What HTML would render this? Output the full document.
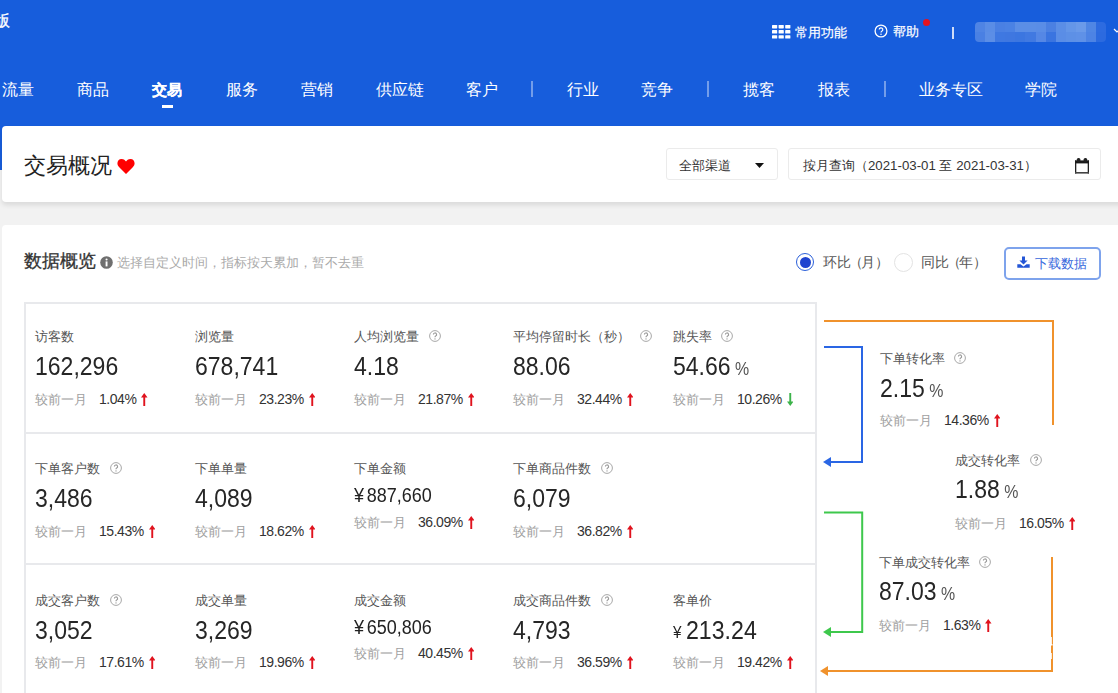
<!DOCTYPE html>
<html><head><meta charset="utf-8">
<style>
html,body{margin:0;padding:0}
body{width:1118px;height:693px;overflow:hidden;position:relative;background:#f2f2f2;font-family:"Liberation Sans",sans-serif;color:#333}
.a{position:absolute;white-space:nowrap;line-height:1}
.hdr{position:absolute;left:0;top:0;width:1118px;height:170px;background:#175ddc}
.nav{color:#fff;font-size:15.5px;top:82px}
.card{position:absolute;background:#fff;border-radius:4px}
.lbl{font-size:13.4px;color:#555}
.val{font-size:26px;color:#262626;transform:scaleX(.885);transform-origin:0 0}
.cmp{font-size:13px;color:#a0a0a0}
.pct{font-size:14px;color:#333;letter-spacing:-.45px}
.pct svg{margin-left:5px;margin-top:1px;vertical-align:top}
</style></head><body>

<div class="hdr"></div>
<div class="a" style="left:-6px;top:13px;font-size:15.5px;color:#fff;-webkit-text-stroke:.3px #fff">版</div>
<div class="a nav" style="left:2px">流量</div>
<div class="a nav" style="left:77px">商品</div>
<div class="a nav" style="left:152px;top:82.5px;font-size:14.8px;font-weight:bold;-webkit-text-stroke:.2px #fff">交易</div>
<div class="a nav" style="left:226px">服务</div>
<div class="a nav" style="left:301px">营销</div>
<div class="a nav" style="left:376px">供应链</div>
<div class="a nav" style="left:466px">客户</div>
<div class="a" style="left:531px;top:81px;width:2px;height:16px;background:rgba(255,255,255,.4)"></div>
<div class="a nav" style="left:567px">行业</div>
<div class="a nav" style="left:641px">竞争</div>
<div class="a" style="left:707px;top:81px;width:2px;height:16px;background:rgba(255,255,255,.4)"></div>
<div class="a nav" style="left:743px">揽客</div>
<div class="a nav" style="left:818px">报表</div>
<div class="a" style="left:884px;top:81px;width:2px;height:16px;background:rgba(255,255,255,.4)"></div>
<div class="a nav" style="left:919px">业务专区</div>
<div class="a nav" style="left:1025px">学院</div>
<div class="a" style="left:162px;top:105px;width:11px;height:2.5px;background:#fff"></div>
<svg class="a" style="left:772px;top:25px" width="19" height="14" viewBox="0 0 19 14"><rect x="0.0" y="0.0" width="5.2" height="3.4" rx=".6" fill="#fff"/><rect x="6.6" y="0.0" width="5.2" height="3.4" rx=".6" fill="#fff"/><rect x="13.2" y="0.0" width="5.2" height="3.4" rx=".6" fill="#fff"/><rect x="0.0" y="5.1" width="5.2" height="3.4" rx=".6" fill="#fff"/><rect x="6.6" y="5.1" width="5.2" height="3.4" rx=".6" fill="#fff"/><rect x="13.2" y="5.1" width="5.2" height="3.4" rx=".6" fill="#fff"/><rect x="0.0" y="10.2" width="5.2" height="3.4" rx=".6" fill="#fff"/><rect x="6.6" y="10.2" width="5.2" height="3.4" rx=".6" fill="#fff"/><rect x="13.2" y="10.2" width="5.2" height="3.4" rx=".6" fill="#fff"/></svg>
<div class="a" style="left:795px;top:26px;font-size:13px;color:#fff;-webkit-text-stroke:.2px #fff">常用功能</div>
<svg class="a" style="left:874px;top:24px" width="14" height="14" viewBox="0 0 14 14"><circle cx="7" cy="7" r="5.9" fill="none" stroke="#fff" stroke-width="1.3"/><path d="M5.2 5.6a1.8 1.8 0 1 1 2.6 1.6c-.6.3-.8.6-.8 1.3" fill="none" stroke="#fff" stroke-width="1.2"/><circle cx="7" cy="10.3" r=".75" fill="#fff"/></svg>
<div class="a" style="left:893px;top:25px;font-size:13px;color:#fff;-webkit-text-stroke:.2px #fff">帮助</div>
<div class="a" style="left:923px;top:19px;width:7px;height:7px;border-radius:50%;background:#e3131f"></div>
<div class="a" style="left:952px;top:27px;width:2px;height:12px;background:#cfdcf7"></div>
<div class="a" style="left:975px;top:22px;width:131px;height:20px;border-radius:4px;overflow:hidden;filter:blur(.6px)"><div class="a" style="left:0px;top:0;width:11px;height:10px;background:#4f84e4"></div><div class="a" style="left:0px;top:10px;width:11px;height:10px;background:#4a80e3"></div><div class="a" style="left:10px;top:0;width:11px;height:10px;background:#5a8de6"></div><div class="a" style="left:10px;top:10px;width:11px;height:10px;background:#5c8ee6"></div><div class="a" style="left:20px;top:0;width:11px;height:10px;background:#4a80e3"></div><div class="a" style="left:20px;top:10px;width:11px;height:10px;background:#3f78e1"></div><div class="a" style="left:30px;top:0;width:11px;height:10px;background:#4b82e4"></div><div class="a" style="left:30px;top:10px;width:11px;height:10px;background:#3f77e0"></div><div class="a" style="left:40px;top:0;width:11px;height:10px;background:#5b8ee6"></div><div class="a" style="left:40px;top:10px;width:11px;height:10px;background:#3c76e0"></div><div class="a" style="left:50px;top:0;width:11px;height:10px;background:#5b8ee6"></div><div class="a" style="left:50px;top:10px;width:11px;height:10px;background:#4179e1"></div><div class="a" style="left:61px;top:0;width:11px;height:10px;background:#5a8de6"></div><div class="a" style="left:61px;top:10px;width:11px;height:10px;background:#5587e5"></div><div class="a" style="left:71px;top:0;width:11px;height:10px;background:#4b80e2"></div><div class="a" style="left:71px;top:10px;width:11px;height:10px;background:#3a74e0"></div><div class="a" style="left:81px;top:0;width:11px;height:10px;background:#5b8ee6"></div><div class="a" style="left:81px;top:10px;width:11px;height:10px;background:#5a8de6"></div><div class="a" style="left:91px;top:0;width:11px;height:10px;background:#6496e8"></div><div class="a" style="left:91px;top:10px;width:11px;height:10px;background:#5d90e6"></div><div class="a" style="left:101px;top:0;width:11px;height:10px;background:#6a9ae9"></div><div class="a" style="left:101px;top:10px;width:11px;height:10px;background:#5f91e7"></div><div class="a" style="left:111px;top:0;width:11px;height:10px;background:#4f86e4"></div><div class="a" style="left:111px;top:10px;width:11px;height:10px;background:#4d83e4"></div><div class="a" style="left:121px;top:0;width:11px;height:10px;background:#2d6be0"></div><div class="a" style="left:121px;top:10px;width:11px;height:10px;background:#2c6adf"></div></div>
<svg class="a" style="left:1113px;top:28px" width="8" height="6" viewBox="0 0 8 6"><path d="M1 1l3 3 3-3" fill="none" stroke="#fff" stroke-width="1.2"/></svg>
<div class="card" style="left:2px;top:126px;width:1140px;height:76px;box-shadow:0 3px 5px rgba(0,0,0,.1)"></div>
<div class="a" style="left:24px;top:155px;font-size:22px;color:#222">交易概况</div>
<svg class="a" style="left:117px;top:159px" width="18" height="15" viewBox="0 0 18 15"><path d="M9 15L2 8C-1 5 .5 0 4.5 0 6.8 0 8.2 1.4 9 2.6 9.8 1.4 11.2 0 13.5 0 17.5 0 19 5 16 8z" fill="#ff0000"/></svg>
<div class="a" style="left:666px;top:148px;width:110px;height:30px;border:1px solid #ebebeb;border-radius:3px;background:#fff"></div>
<div class="a" style="left:679px;top:159px;font-size:13.3px;color:#333">全部渠道</div>
<svg class="a" style="left:755px;top:163px" width="9" height="5" viewBox="0 0 9 5"><path d="M0 0H9L4.5 5z" fill="#111"/></svg>
<div class="a" style="left:788px;top:148px;width:311px;height:30px;border:1px solid #ebebeb;border-radius:3px;background:#fff"></div>
<div class="a" style="left:803px;top:158.5px;font-size:13.25px;color:#333">按月查询（2021-03-01 至 2021-03-31）</div>
<svg class="a" style="left:1074px;top:157px" width="16" height="17" viewBox="0 0 16 17"><rect x="1" y="3.5" width="1.3" height="13" fill="#222"/><rect x="13.7" y="3.5" width="1.3" height="13" fill="#222"/><rect x="1" y="15" width="14" height="1.6" fill="#444"/><rect x="1" y="3.4" width="14" height="3" fill="#1a1a1a"/><rect x="2.8" y="1" width="3.6" height="4" rx="1.6" fill="#222"/><rect x="9.6" y="1" width="3.6" height="4" rx="1.6" fill="#222"/></svg>
<div class="card" style="left:2px;top:225px;width:1140px;height:600px"></div>
<div class="a" style="left:24px;top:253px;font-size:17.5px;color:#333;-webkit-text-stroke:.3px #333">数据概览</div>
<svg class="a" style="left:100px;top:256px" width="13" height="13" viewBox="0 0 13 13"><circle cx="6.5" cy="6.5" r="6.3" fill="#6f6f6f"/><rect x="5.6" y="5.4" width="1.9" height="5" fill="#fff"/><circle cx="6.55" cy="3.5" r="1.05" fill="#fff"/></svg>
<div class="a" style="left:117px;top:256px;font-size:13.2px;color:#aaa">选择自定义时间，指标按天累加，暂不去重</div>
<div class="a" style="left:796px;top:253px;width:16px;height:16px;border:1.5px solid #2b5fd9;border-radius:50%;background:#fff"></div>
<div class="a" style="left:800px;top:257px;width:11px;height:11px;border-radius:50%;background:#1e42cf"></div>
<div class="a" style="left:823px;top:255.5px;font-size:13.6px;color:#555">环<span style="letter-spacing:-1.8px">比（</span>月）</div>
<div class="a" style="left:894px;top:253px;width:17px;height:17px;border:1px solid #e3e3e3;border-radius:50%;background:#fff"></div>
<div class="a" style="left:921px;top:255.5px;font-size:13.6px;color:#555">同<span style="letter-spacing:-1.8px">比（</span>年）</div>
<div class="a" style="left:1004px;top:247px;width:97px;height:33px;box-sizing:border-box;border:2px solid #7ea3ec;border-radius:5px"></div>
<svg class="a" style="left:1017px;top:256px" width="13" height="12" viewBox="0 0 13 12"><path d="M5 0.5h3v4h2.6L6.5 8.6 2.4 4.5H5z" fill="#2456d6"/><path d="M0.3 8.3h3.2l3 2.2 3-2.2h3.2v3.5H0.3z" fill="#2456d6"/></svg>
<div class="a" style="left:1035px;top:257px;font-size:13px;color:#3566dc">下载数据</div>
<div class="a" style="left:24px;top:302px;width:793px;height:420px;border:2px solid #e8e9ec;border-bottom:0;box-sizing:border-box"></div>
<div class="a" style="left:26px;top:432px;width:789px;height:2px;background:#e8e9ec"></div>
<div class="a" style="left:26px;top:563px;width:789px;height:2px;background:#e8e9ec"></div>
<div class="a lbl" style="left:35px;top:330px">访客数</div>
<div class="a val" style="left:35px;top:353px">162,296</div>
<div class="a cmp" style="left:35px;top:393px">较前一月</div>
<div class="a pct" style="left:99px;top:391.5px">1.04%<svg width="6.5" height="13" viewBox="0 0 6.5 13"><path d="M3.25 0L6.5 4.4H4.2V13H2.3V4.4H0z" fill="#e0131e"/></svg></div>
<div class="a lbl" style="left:195px;top:330px">浏览量</div>
<div class="a val" style="left:195px;top:353px">678,741</div>
<div class="a cmp" style="left:195px;top:393px">较前一月</div>
<div class="a pct" style="left:259px;top:391.5px">23.23%<svg width="6.5" height="13" viewBox="0 0 6.5 13"><path d="M3.25 0L6.5 4.4H4.2V13H2.3V4.4H0z" fill="#e0131e"/></svg></div>
<div class="a lbl" style="left:354px;top:330px">人均浏览量</div>
<div class="a" style="left:429px;top:330px"><svg width="12" height="12" viewBox="0 0 12 12" style="vertical-align:top"><circle cx="6" cy="6" r="5.4" fill="none" stroke="#a8a8a8" stroke-width="1"/><path d="M4.4 4.6a1.6 1.6 0 1 1 2.3 1.4c-.5.3-.7.55-.7 1.2" fill="none" stroke="#999" stroke-width="1.15"/><circle cx="6" cy="8.9" r=".7" fill="#999"/></svg></div>
<div class="a val" style="left:354px;top:353px">4.18</div>
<div class="a cmp" style="left:354px;top:393px">较前一月</div>
<div class="a pct" style="left:418px;top:391.5px">21.87%<svg width="6.5" height="13" viewBox="0 0 6.5 13"><path d="M3.25 0L6.5 4.4H4.2V13H2.3V4.4H0z" fill="#e0131e"/></svg></div>
<div class="a lbl" style="left:513px;top:330px">平均停留时长（秒）</div>
<div class="a" style="left:640px;top:330px"><svg width="12" height="12" viewBox="0 0 12 12" style="vertical-align:top"><circle cx="6" cy="6" r="5.4" fill="none" stroke="#a8a8a8" stroke-width="1"/><path d="M4.4 4.6a1.6 1.6 0 1 1 2.3 1.4c-.5.3-.7.55-.7 1.2" fill="none" stroke="#999" stroke-width="1.15"/><circle cx="6" cy="8.9" r=".7" fill="#999"/></svg></div>
<div class="a val" style="left:513px;top:353px">88.06</div>
<div class="a cmp" style="left:513px;top:393px">较前一月</div>
<div class="a pct" style="left:577px;top:391.5px">32.44%<svg width="6.5" height="13" viewBox="0 0 6.5 13"><path d="M3.25 0L6.5 4.4H4.2V13H2.3V4.4H0z" fill="#e0131e"/></svg></div>
<div class="a lbl" style="left:673px;top:330px">跳失率</div>
<div class="a" style="left:721px;top:330px"><svg width="12" height="12" viewBox="0 0 12 12" style="vertical-align:top"><circle cx="6" cy="6" r="5.4" fill="none" stroke="#a8a8a8" stroke-width="1"/><path d="M4.4 4.6a1.6 1.6 0 1 1 2.3 1.4c-.5.3-.7.55-.7 1.2" fill="none" stroke="#999" stroke-width="1.15"/><circle cx="6" cy="8.9" r=".7" fill="#999"/></svg></div>
<div class="a val" style="left:673px;top:353px">54.66<span style="font-size:18px;color:#555"> %</span></div>
<div class="a cmp" style="left:673px;top:393px">较前一月</div>
<div class="a pct" style="left:737px;top:391.5px">10.26%<svg width="6.5" height="13" viewBox="0 0 6.5 13"><path d="M3.25 13L6.5 8.6H4.2V0H2.3V8.6H0z" fill="#3cb34a"/></svg></div>
<div class="a lbl" style="left:35px;top:462px">下单客户数</div>
<div class="a" style="left:110px;top:462px"><svg width="12" height="12" viewBox="0 0 12 12" style="vertical-align:top"><circle cx="6" cy="6" r="5.4" fill="none" stroke="#a8a8a8" stroke-width="1"/><path d="M4.4 4.6a1.6 1.6 0 1 1 2.3 1.4c-.5.3-.7.55-.7 1.2" fill="none" stroke="#999" stroke-width="1.15"/><circle cx="6" cy="8.9" r=".7" fill="#999"/></svg></div>
<div class="a val" style="left:35px;top:485px">3,486</div>
<div class="a cmp" style="left:35px;top:525px">较前一月</div>
<div class="a pct" style="left:99px;top:523.5px">15.43%<svg width="6.5" height="13" viewBox="0 0 6.5 13"><path d="M3.25 0L6.5 4.4H4.2V13H2.3V4.4H0z" fill="#e0131e"/></svg></div>
<div class="a lbl" style="left:195px;top:462px">下单单量</div>
<div class="a val" style="left:195px;top:485px">4,089</div>
<div class="a cmp" style="left:195px;top:525px">较前一月</div>
<div class="a pct" style="left:259px;top:523.5px">18.62%<svg width="6.5" height="13" viewBox="0 0 6.5 13"><path d="M3.25 0L6.5 4.4H4.2V13H2.3V4.4H0z" fill="#e0131e"/></svg></div>
<div class="a lbl" style="left:354px;top:462px">下单金额</div>
<div class="a" style="left:354px;top:485px;font-size:20px;color:#222;transform:scaleX(.9);transform-origin:0 0">¥<span style="margin-left:3px">887,660</span></div>
<div class="a cmp" style="left:354px;top:516px">较前一月</div>
<div class="a pct" style="left:418px;top:514.5px">36.09%<svg width="6.5" height="13" viewBox="0 0 6.5 13"><path d="M3.25 0L6.5 4.4H4.2V13H2.3V4.4H0z" fill="#e0131e"/></svg></div>
<div class="a lbl" style="left:513px;top:462px">下单商品件数</div>
<div class="a" style="left:601px;top:462px"><svg width="12" height="12" viewBox="0 0 12 12" style="vertical-align:top"><circle cx="6" cy="6" r="5.4" fill="none" stroke="#a8a8a8" stroke-width="1"/><path d="M4.4 4.6a1.6 1.6 0 1 1 2.3 1.4c-.5.3-.7.55-.7 1.2" fill="none" stroke="#999" stroke-width="1.15"/><circle cx="6" cy="8.9" r=".7" fill="#999"/></svg></div>
<div class="a val" style="left:513px;top:485px">6,079</div>
<div class="a cmp" style="left:513px;top:525px">较前一月</div>
<div class="a pct" style="left:577px;top:523.5px">36.82%<svg width="6.5" height="13" viewBox="0 0 6.5 13"><path d="M3.25 0L6.5 4.4H4.2V13H2.3V4.4H0z" fill="#e0131e"/></svg></div>
<div class="a lbl" style="left:35px;top:594px">成交客户数</div>
<div class="a" style="left:110px;top:594px"><svg width="12" height="12" viewBox="0 0 12 12" style="vertical-align:top"><circle cx="6" cy="6" r="5.4" fill="none" stroke="#a8a8a8" stroke-width="1"/><path d="M4.4 4.6a1.6 1.6 0 1 1 2.3 1.4c-.5.3-.7.55-.7 1.2" fill="none" stroke="#999" stroke-width="1.15"/><circle cx="6" cy="8.9" r=".7" fill="#999"/></svg></div>
<div class="a val" style="left:35px;top:617px">3,052</div>
<div class="a cmp" style="left:35px;top:656px">较前一月</div>
<div class="a pct" style="left:99px;top:654.5px">17.61%<svg width="6.5" height="13" viewBox="0 0 6.5 13"><path d="M3.25 0L6.5 4.4H4.2V13H2.3V4.4H0z" fill="#e0131e"/></svg></div>
<div class="a lbl" style="left:195px;top:594px">成交单量</div>
<div class="a val" style="left:195px;top:617px">3,269</div>
<div class="a cmp" style="left:195px;top:656px">较前一月</div>
<div class="a pct" style="left:259px;top:654.5px">19.96%<svg width="6.5" height="13" viewBox="0 0 6.5 13"><path d="M3.25 0L6.5 4.4H4.2V13H2.3V4.4H0z" fill="#e0131e"/></svg></div>
<div class="a lbl" style="left:354px;top:594px">成交金额</div>
<div class="a" style="left:354px;top:617px;font-size:20px;color:#222;transform:scaleX(.9);transform-origin:0 0">¥<span style="margin-left:3px">650,806</span></div>
<div class="a cmp" style="left:354px;top:647px">较前一月</div>
<div class="a pct" style="left:418px;top:645.5px">40.45%<svg width="6.5" height="13" viewBox="0 0 6.5 13"><path d="M3.25 0L6.5 4.4H4.2V13H2.3V4.4H0z" fill="#e0131e"/></svg></div>
<div class="a lbl" style="left:513px;top:594px">成交商品件数</div>
<div class="a" style="left:601px;top:594px"><svg width="12" height="12" viewBox="0 0 12 12" style="vertical-align:top"><circle cx="6" cy="6" r="5.4" fill="none" stroke="#a8a8a8" stroke-width="1"/><path d="M4.4 4.6a1.6 1.6 0 1 1 2.3 1.4c-.5.3-.7.55-.7 1.2" fill="none" stroke="#999" stroke-width="1.15"/><circle cx="6" cy="8.9" r=".7" fill="#999"/></svg></div>
<div class="a val" style="left:513px;top:617px">4,793</div>
<div class="a cmp" style="left:513px;top:656px">较前一月</div>
<div class="a pct" style="left:577px;top:654.5px">36.59%<svg width="6.5" height="13" viewBox="0 0 6.5 13"><path d="M3.25 0L6.5 4.4H4.2V13H2.3V4.4H0z" fill="#e0131e"/></svg></div>
<div class="a lbl" style="left:673px;top:594px">客单价</div>
<div class="a" style="left:673px;top:624px;font-size:17px;color:#222;transform:scaleX(.9);transform-origin:0 0">¥</div>
<div class="a val" style="left:686px;top:617px;transform:scaleX(.89)">213.24</div>
<div class="a cmp" style="left:673px;top:656px">较前一月</div>
<div class="a pct" style="left:737px;top:654.5px">19.42%<svg width="6.5" height="13" viewBox="0 0 6.5 13"><path d="M3.25 0L6.5 4.4H4.2V13H2.3V4.4H0z" fill="#e0131e"/></svg></div>
<div class="a lbl" style="left:880px;top:352px">下单转化率</div>
<div class="a" style="left:954px;top:352px"><svg width="12" height="12" viewBox="0 0 12 12" style="vertical-align:top"><circle cx="6" cy="6" r="5.4" fill="none" stroke="#a8a8a8" stroke-width="1"/><path d="M4.4 4.6a1.6 1.6 0 1 1 2.3 1.4c-.5.3-.7.55-.7 1.2" fill="none" stroke="#999" stroke-width="1.15"/><circle cx="6" cy="8.9" r=".7" fill="#999"/></svg></div>
<div class="a val" style="left:880px;top:375px">2.15<span style="font-size:18px;color:#555"> %</span></div>
<div class="a cmp" style="left:880px;top:414px">较前一月</div>
<div class="a pct" style="left:944px;top:412.5px">14.36%<svg width="6.5" height="13" viewBox="0 0 6.5 13"><path d="M3.25 0L6.5 4.4H4.2V13H2.3V4.4H0z" fill="#e0131e"/></svg></div>
<div class="a lbl" style="left:955px;top:454px">成交转化率</div>
<div class="a" style="left:1030px;top:454px"><svg width="12" height="12" viewBox="0 0 12 12" style="vertical-align:top"><circle cx="6" cy="6" r="5.4" fill="none" stroke="#a8a8a8" stroke-width="1"/><path d="M4.4 4.6a1.6 1.6 0 1 1 2.3 1.4c-.5.3-.7.55-.7 1.2" fill="none" stroke="#999" stroke-width="1.15"/><circle cx="6" cy="8.9" r=".7" fill="#999"/></svg></div>
<div class="a val" style="left:955px;top:476px">1.88<span style="font-size:18px;color:#555"> %</span></div>
<div class="a cmp" style="left:955px;top:517px">较前一月</div>
<div class="a pct" style="left:1019px;top:515.5px">16.05%<svg width="6.5" height="13" viewBox="0 0 6.5 13"><path d="M3.25 0L6.5 4.4H4.2V13H2.3V4.4H0z" fill="#e0131e"/></svg></div>
<div class="a lbl" style="left:879px;top:556px">下单成交转化率</div>
<div class="a" style="left:979px;top:556px"><svg width="12" height="12" viewBox="0 0 12 12" style="vertical-align:top"><circle cx="6" cy="6" r="5.4" fill="none" stroke="#a8a8a8" stroke-width="1"/><path d="M4.4 4.6a1.6 1.6 0 1 1 2.3 1.4c-.5.3-.7.55-.7 1.2" fill="none" stroke="#999" stroke-width="1.15"/><circle cx="6" cy="8.9" r=".7" fill="#999"/></svg></div>
<div class="a val" style="left:879px;top:578px">87.03<span style="font-size:18px;color:#555"> %</span></div>
<div class="a cmp" style="left:879px;top:619px">较前一月</div>
<div class="a pct" style="left:943px;top:617.5px">1.63%<svg width="6.5" height="13" viewBox="0 0 6.5 13"><path d="M3.25 0L6.5 4.4H4.2V13H2.3V4.4H0z" fill="#e0131e"/></svg></div>
<svg class="a" style="left:0;top:0" width="1118" height="693"><path d="M824 321H1053V425" fill="none" stroke="#f0922c" stroke-width="2"/><path d="M824 347H862V462H830" fill="none" stroke="#2a66e4" stroke-width="2"/><path d="M823 462L831 457V467z" fill="#2a66e4"/><path d="M824 512.5H862.2V632H830" fill="none" stroke="#3ec84c" stroke-width="2"/><path d="M823 632L831 627V637z" fill="#3ec84c"/><path d="M1052 557V671H828" fill="none" stroke="#f0922c" stroke-width="2"/><path d="M820 671L828 666V676z" fill="#f0922c"/><rect x="1050.5" y="637" width="1.5" height="7" fill="#fff" opacity=".85"/><rect x="1051" y="644" width="1.5" height="1.5" fill="#fff"/><rect x="1050.5" y="653" width="1.5" height="6" fill="#fff" opacity=".8"/></svg>
</body></html>
